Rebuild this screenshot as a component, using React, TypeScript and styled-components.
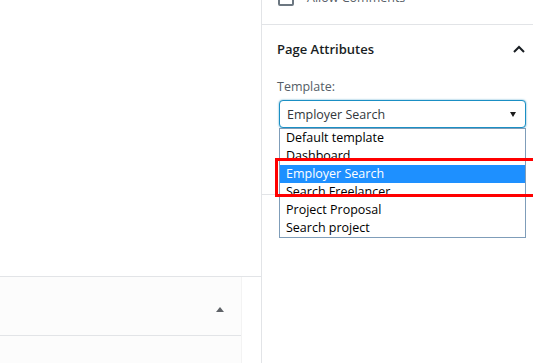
import * as React from 'react';
import styled, { createGlobalStyle } from 'styled-components';

const GlobalStyle = createGlobalStyle`
  html, body {
    margin: 0;
    padding: 0;
    background: #ffffff;
    overflow: hidden;
  }
  body {
    font-family: 'Open Sans', 'Noto Sans', sans-serif;
    font-size: 12.5px;
    color: #191e23;
  }
`;

const Page = styled.div`
  display: flex;
  width: 533px;
  height: 363px;
  overflow: hidden;
`;

const Main = styled.div`
  width: 261px;
  display: flex;
  flex-direction: column;
`;

const MainTop = styled.div`
  height: 276px;
  border-bottom: 1px solid #e2e4e7;
`;

const MetaBox = styled.div`
  width: 241px;
  flex: 1;
  background: #fcfcfc;
  border-right: 1px solid #f3f3f3;
`;

const MetaHeader = styled.div`
  height: 59px;
  display: flex;
  align-items: center;
  justify-content: flex-end;
  padding: 6px 17px 0 0;
  box-sizing: border-box;
  border-bottom: 1px solid #e2e4e7;
`;

const ToggleUp = styled.span`
  width: 0;
  height: 0;
  border-left: 4px solid transparent;
  border-right: 4px solid transparent;
  border-bottom: 5px solid #5f6368;
`;

const Sidebar = styled.div`
  position: relative;
  flex: 1;
  border-left: 1px solid #e2e4e7;
  display: flex;
  flex-direction: column;
`;

const Panel = styled.div<{ $shift?: number }>`
  margin-top: ${(p) => p.$shift || 0}px;
  border-bottom: 1px solid #e2e4e7;
`;

const CheckRow = styled.label`
  display: flex;
  align-items: center;
  gap: 13px;
  height: 16px;
  line-height: 16px;
  padding: 0 0 18px 16px;
  color: #555d66;
`;

const Checkbox = styled.span`
  width: 16px;
  height: 16px;
  box-sizing: border-box;
  border: 2px solid #6c7781;
  border-radius: 2px;
  background: #fff;
`;

const PanelHeader = styled.div`
  height: 48px;
  display: flex;
  align-items: center;
  justify-content: space-between;
  padding: 0 8px 0 15px;
`;

const PanelTitle = styled.h2`
  margin: 0;
  font-size: 13px;
  font-weight: 600;
  color: #191e23;
`;

const PanelBody = styled.div`
  padding: 5px 7px 66px 15px;
`;

const FieldLabel = styled.div`
  line-height: 18px;
  color: #555d66;
  margin-bottom: 4px;
`;

const SelectWrap = styled.div`
  position: relative;
  margin-left: 2px;
  width: 247px;
`;

const SelectBox = styled.div`
  height: 28px;
  box-sizing: border-box;
  display: flex;
  align-items: center;
  justify-content: space-between;
  padding: 0 9px 0 7px;
  border: 1px solid #1a8fc4;
  border-radius: 4px;
  box-shadow: 0 0 2px rgba(30, 140, 190, 0.8);
  color: #32373c;
  background: #fff;
`;

const SelectArrow = styled.span`
  width: 0;
  height: 0;
  margin-top: 1px;
  border-left: 3px solid transparent;
  border-right: 3px solid transparent;
  border-top: 5px solid #1b1b1b;
`;

const Dropdown = styled.ul`
  position: absolute;
  top: 100%;
  left: 0;
  width: 247px;
  box-sizing: border-box;
  margin: 0;
  padding: 0;
  list-style: none;
  background: #fff;
  border: 1px solid #7f9db9;
  z-index: 2;
`;

const Option = styled.li<{ $selected?: boolean }>`
  height: 18px;
  line-height: 18px;
  padding-left: 6px;
  color: ${(p) => (p.$selected ? '#ffffff' : '#000000')};
  background: ${(p) => (p.$selected ? '#1e90ff' : 'transparent')};
  white-space: nowrap;
`;

const Annotation = styled.div`
  position: absolute;
  left: 13px;
  top: 158px;
  right: -20px;
  height: 39px;
  box-sizing: border-box;
  border: 3px solid #ff0000;
  z-index: 3;
  pointer-events: none;
`;

const ChevronUp = () => (
  <svg width="12" height="8" viewBox="0 0 12 8" fill="none">
    <path d="M1 7 L6 2 L11 7" stroke="#191e23" strokeWidth="2" />
  </svg>
);

const templates = [
  'Default template',
  'Dashboard',
  'Employer Search',
  'Search Freelancer',
  'Project Proposal',
  'Search project',
];

export default function App() {
  const selected = 'Employer Search';
  return (
    <>
      <GlobalStyle />
      <Page>
        <Main>
          <MainTop />
          <MetaBox>
            <MetaHeader>
              <ToggleUp />
            </MetaHeader>
          </MetaBox>
        </Main>
        <Sidebar>
          <Panel $shift={-10}>
            <CheckRow>
              <Checkbox />
              Allow Comments
            </CheckRow>
          </Panel>
          <Panel>
            <PanelHeader>
              <PanelTitle>Page Attributes</PanelTitle>
              <ChevronUp />
            </PanelHeader>
            <PanelBody>
              <FieldLabel>Template:</FieldLabel>
              <SelectWrap>
                <SelectBox>
                  {selected}
                  <SelectArrow />
                </SelectBox>
                <Dropdown>
                  {templates.map((t) => (
                    <Option key={t} $selected={t === selected}>
                      {t}
                    </Option>
                  ))}
                </Dropdown>
              </SelectWrap>
            </PanelBody>
          </Panel>
          <Annotation />
        </Sidebar>
      </Page>
    </>
  );
}
